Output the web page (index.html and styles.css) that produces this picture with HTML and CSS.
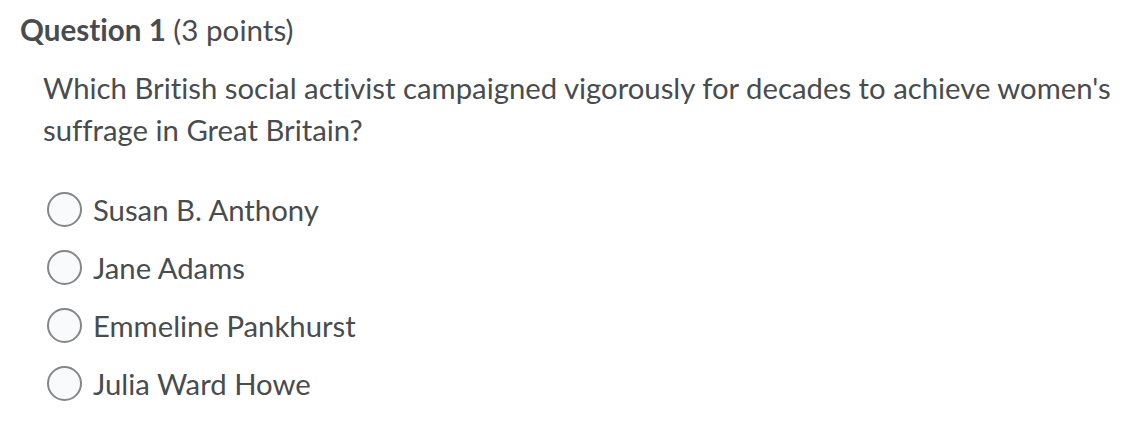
FILE: index.html
```html
<!DOCTYPE html>
<html>
<head>
<meta charset="utf-8">
<link rel="stylesheet" href="styles.css">
</head>
<body>
<div class="question">
  <h2 class="q-title"><strong>Question 1</strong> (3 points)</h2>
  <div class="q-body">
    <p class="q-text">Which British social activist campaigned vigorously for decades to achieve women's suffrage in Great Britain?</p>
    <div class="options">
      <label class="option"><span class="radio"></span><span class="opt-text">Susan B. Anthony</span></label>
      <label class="option"><span class="radio"></span><span class="opt-text">Jane Adams</span></label>
      <label class="option"><span class="radio"></span><span class="opt-text">Emmeline Pankhurst</span></label>
      <label class="option"><span class="radio"></span><span class="opt-text">Julia Ward Howe</span></label>
    </div>
  </div>
</div>
</body>
</html>
```
FILE: styles.css
```css
html, body {
  margin: 0;
  padding: 0;
  background: #ffffff;
}
body {
  font-family: Lato, "Open Sans", sans-serif;
  color: #494c4e;
  font-variant-ligatures: no-common-ligatures;
  font-feature-settings: "liga" 0;
}
.question {
  padding: 12px 20px 0 20px;
}
.q-title {
  margin: 0;
  font-size: 29.6px;
  font-weight: 400;
  line-height: 36px;
}
.q-title strong {
  font-weight: 700;
}
.q-body {
  padding-left: 23px;
  padding-top: 19px;
}
.q-text {
  margin: 0;
  font-size: 29.3px;
  line-height: 42px;
}
.options {
  display: flex;
  flex-direction: column;
  gap: 23px;
  margin-top: 41px;
  padding-left: 4px;
}
.option {
  display: flex;
  align-items: center;
  gap: 11px;
  font-size: 29.3px;
  line-height: 35px;
}
.radio {
  box-sizing: border-box;
  width: 35px;
  height: 35px;
  border: 2px solid #868686;
  border-radius: 50%;
  background: #f9fafb;
  flex: none;
}
```
